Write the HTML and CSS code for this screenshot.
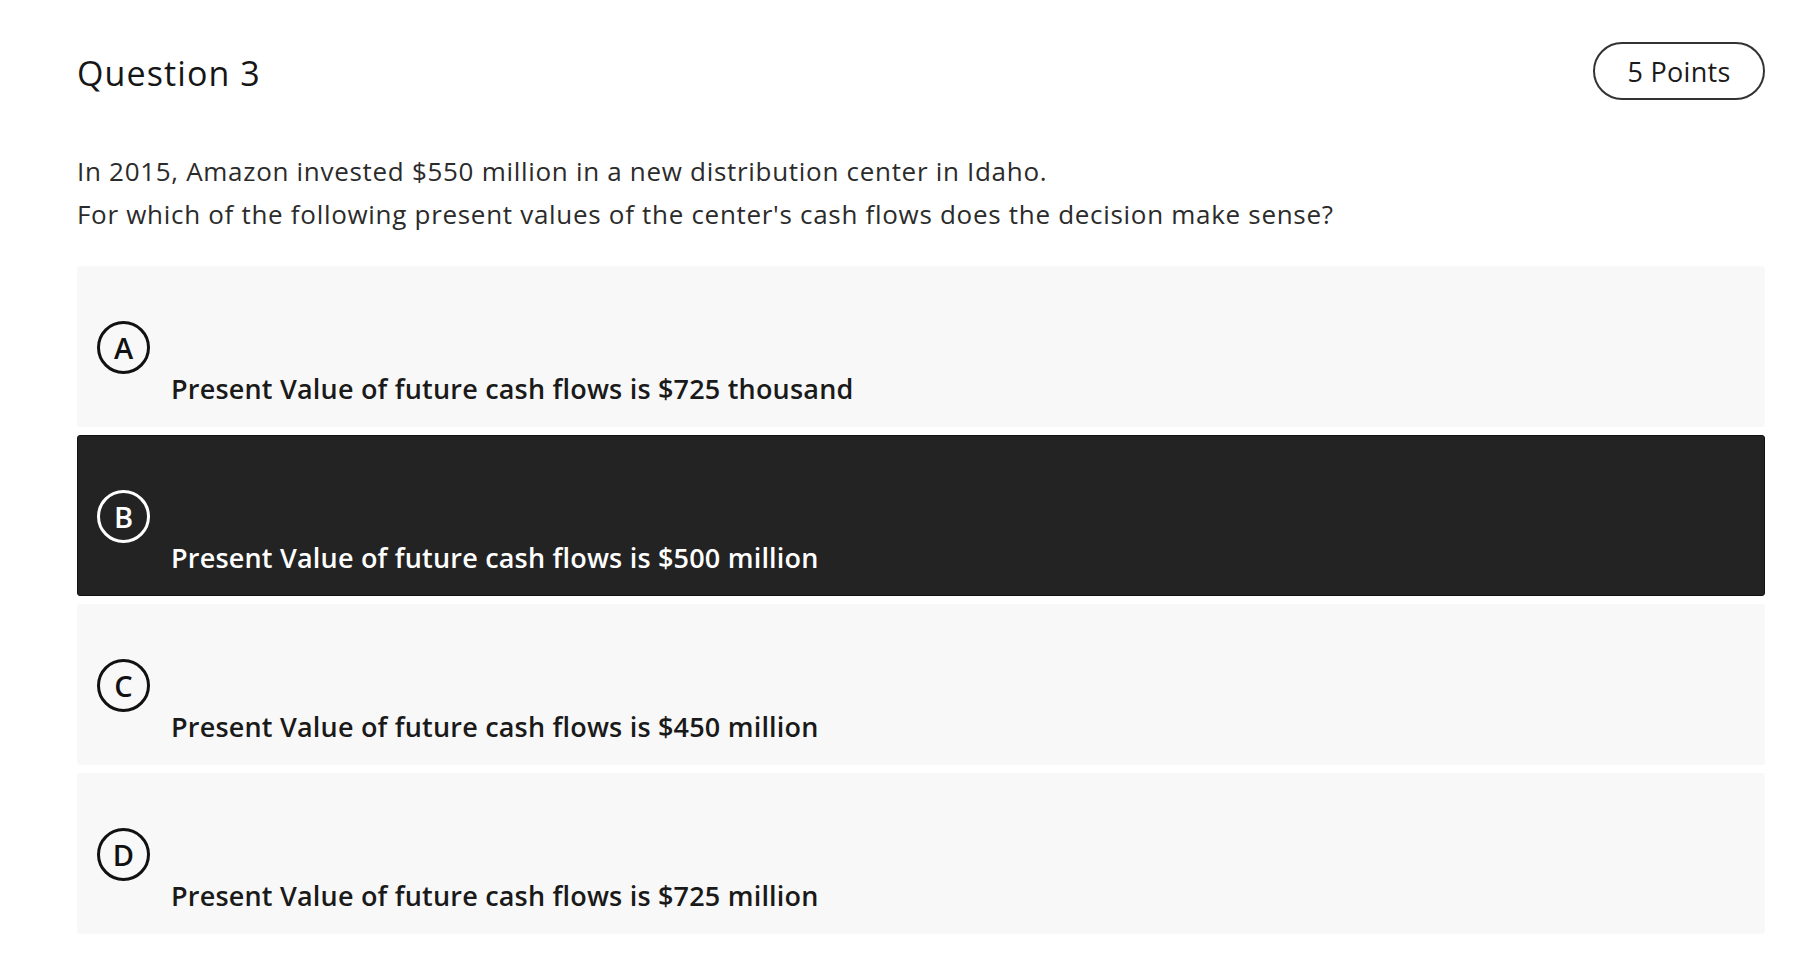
FILE: index.html
```html
<!DOCTYPE html>
<html lang="en">
<head>
<meta charset="utf-8">
<title>Question 3</title>
<link rel="stylesheet" href="styles.css">
</head>
<body>
<main class="quiz">
  <header class="q-head">
    <h1 class="q-title">Question 3</h1>
    <span class="q-points">5 Points</span>
  </header>
  <div class="q-text">
    <p>In 2015, Amazon invested $550 million in a new distribution center in Idaho.</p>
    <p>For which of the following present values of the center's cash flows does the decision make sense?</p>
  </div>
  <ul class="options">
    <li class="option">
      <span class="badge">A</span>
      <span class="opt-text">Present Value of future cash flows is $725 thousand</span>
    </li>
    <li class="option selected">
      <span class="badge">B</span>
      <span class="opt-text">Present Value of future cash flows is $500 million</span>
    </li>
    <li class="option">
      <span class="badge">C</span>
      <span class="opt-text">Present Value of future cash flows is $450 million</span>
    </li>
    <li class="option">
      <span class="badge">D</span>
      <span class="opt-text">Present Value of future cash flows is $725 million</span>
    </li>
  </ul>
</main>
</body>
</html>
```
FILE: styles.css
```css
* { box-sizing: border-box; }
html, body {
  margin: 0;
  padding: 0;
  background: #ffffff;
}
body {
  font-family: "Open Sans", "Noto Sans", sans-serif;
  color: #222222;
}
.quiz {
  padding: 42px 41px 0 77px;
}
.q-head {
  display: flex;
  align-items: center;
  justify-content: space-between;
  height: 58px;
}
.q-title {
  margin: 4px 0 0 0;
  font-size: 34px;
  font-weight: 400;
  letter-spacing: 1.1px;
  line-height: 40px;
  color: #161616;
}
.q-points {
  display: flex;
  align-items: center;
  justify-content: center;
  width: 172px;
  height: 58px;
  border: 2px solid #333333;
  border-radius: 29px;
  font-size: 27px;
  letter-spacing: 0.3px;
  line-height: 1;
  color: #1a1a1a;
}
.q-text {
  margin-top: 50px;
  font-size: 26px;
  letter-spacing: 0.7px;
  line-height: 43px;
  color: #2b2b2b;
}
.q-text p { margin: 0; }
.options {
  list-style: none;
  margin: 30px 0 0 0;
  padding: 0;
  display: flex;
  flex-direction: column;
  gap: 8px;
}
.option {
  display: flex;
  flex-direction: column;
  align-items: flex-start;
  height: 161px;
  padding: 55px 20px 0 20px;
  background: #f8f8f8;
  border-radius: 3px;
}
.option.selected {
  background: #232323;
  border: 1px solid #111111;
  padding-top: 54px;
  padding-left: 19px;
}
.badge {
  display: flex;
  align-items: center;
  justify-content: center;
  width: 53px;
  height: 53px;
  border: 3px solid #111111;
  border-radius: 50%;
  font-size: 29px;
  font-weight: 600;
  line-height: 1;
  color: #111111;
}
.selected .badge {
  border-color: #ffffff;
  color: #ffffff;
}
.opt-text {
  margin-left: 74px;
  margin-top: -3px;
  font-size: 27px;
  font-weight: 600;
  letter-spacing: 0.2px;
  line-height: 36px;
  color: #1a1a1a;
}
.selected .opt-text {
  color: #ffffff;
}
```
